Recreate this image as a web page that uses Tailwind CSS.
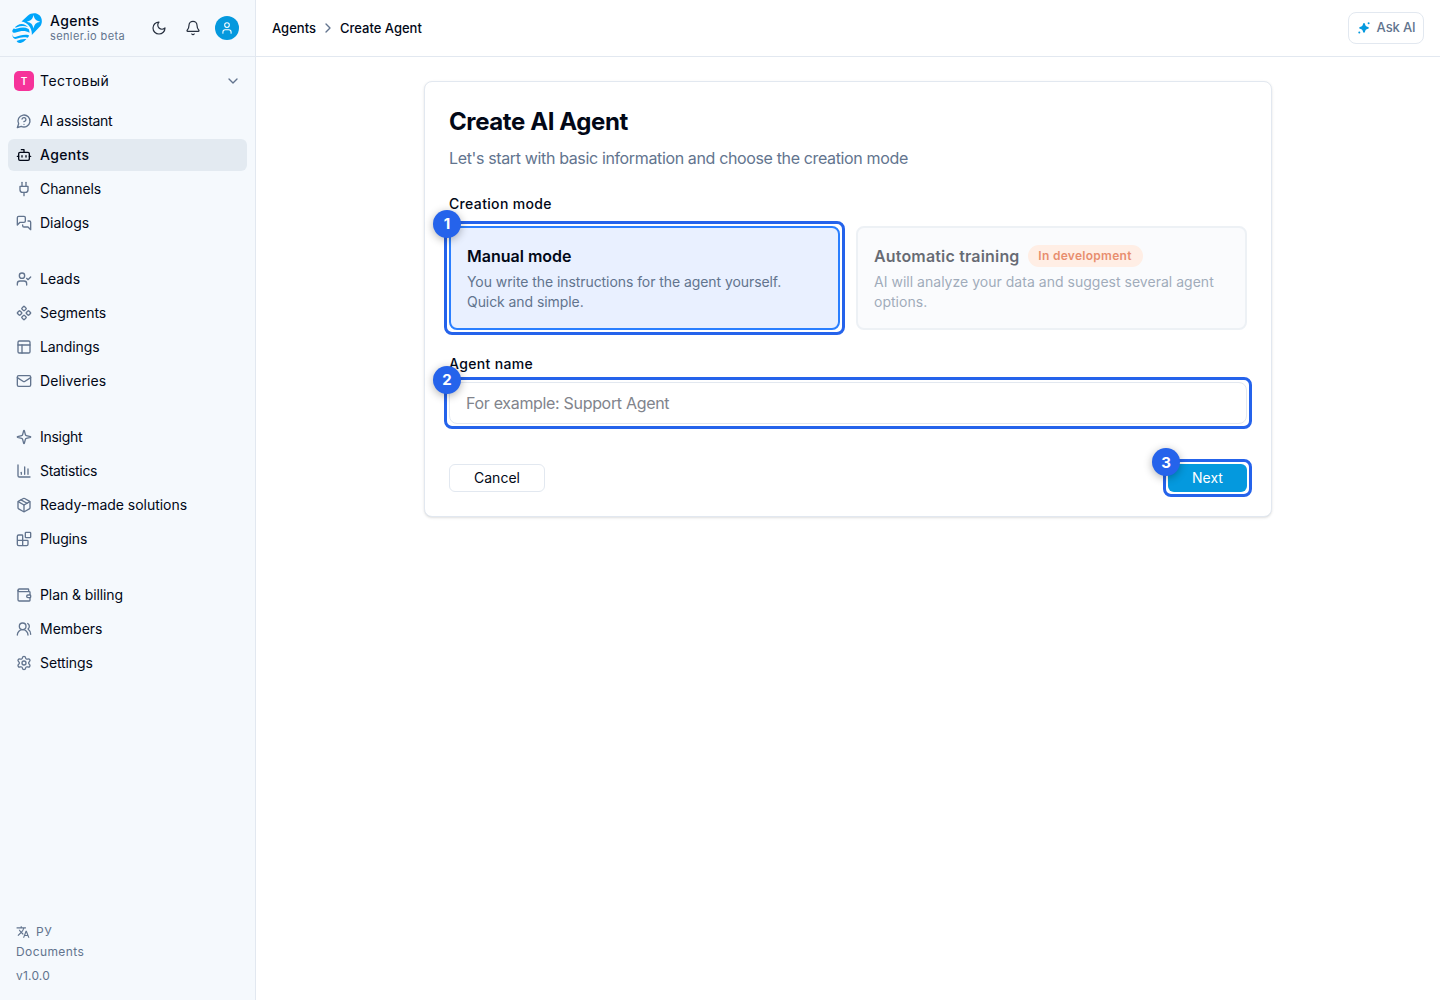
<!DOCTYPE html>
<html lang="en">
<head>
  <meta charset="UTF-8" />
  <meta name="viewport" content="width=device-width, initial-scale=1.0"/>
  <title>Create AI Agent</title>
  <script src="https://cdn.jsdelivr.net/npm/@tailwindcss/browser@4"></script>
</head>

<body class="flex h-screen overflow-hidden bg-white text-[#020817] font-['Inter',sans-serif]">
  <!-- Sidebar -->
  <aside class="flex w-64 shrink-0 flex-col border-r border-slate-200 bg-[#f5f9fd]">
    <div class="flex h-[57px] items-center border-b border-slate-200 pl-3 pr-4">
      <svg class="size-[30px]" viewBox="0 0 30 30" fill="none">
        <path fill="#00a6fb" fill-rule="evenodd" d="M9.5 8.6 16 2.5C19-.3 24.5-.7 27.5 2.3c3 3 3.2 8.200.2 11.500L19.800 22c.6-6.500-3.800-12.500-10.300-13.400ZM21.500 2c-1 4.400-2.300 5.700-6.700 6.700 4.400 1 5.700 2.300 6.700 6.700 1-4.400 2.300-5.700 6.700-6.700-4.400-1-5.700-2.300-6.700-6.700Z"/>
        <path fill="#00a6fb" d="M5.500 12.200c3.700-2.500 8.400-1 10.600 1.900-3.900-1.500-7.300-1.300-11.200.1-1.500.6-2.300.2-1.500-.5Z"/>
        <path fill="#00a6fb" d="M.3 18.200c.3 1.500 1.700 1.900 3.400 1.400 4.800-1.700 9.300-2.600 13.900.2-.1-1.700-.4-2.900-1-3.900-3.900-1.900-7.600-1.500-11.400-.3-1.800.6-3 .5-3.200-.4C.9 16.100.3 17 .3 18.200Z"/>
        <path fill="#00a6fb" d="M.2 20.500c.1 2.400 1 3.800 3 3.500 4.300-.7 8.400-3.200 14-1.600-.3 1-.9 1.800-1.500 2.400-5-1.100-7.900.1-11.300 1-1.400.3-2.600-.2-3.300-1.300-.8-1.300-1.100-2.700-.9-4Z"/>
        <path fill="#00a6fb" d="M4.600 28c3.500-1.300 6.200-2.300 9.800-1.900-1.900 2.300-3.800 3.700-6 3.900-1.500.1-3.200-.5-3.800-2Z"/>
      </svg>
      <div class="ml-2 flex-1 pb-0.5">
        <div class="text-sm leading-[17px] font-medium tracking-[0.35px]">Agents</div>
        <div class="text-[11px] leading-[14px] tracking-[0.38px] text-slate-500">senler.io beta</div>
      </div>
      <svg class="size-4 text-[#27303f]" viewBox="0 0 24 24" fill="none" stroke="currentColor" stroke-width="1.800" stroke-linecap="round" stroke-linejoin="round"><path d="M12 3a6 6 0 0 0 9 9 9 9 0 1 1-9-9Z"/></svg>
      <svg class="ml-[18px] size-4 text-[#27303f]" viewBox="0 0 24 24" fill="none" stroke="currentColor" stroke-width="1.800" stroke-linecap="round" stroke-linejoin="round"><path d="M10.268 21a2 2 0 0 0 3.464 0"/><path d="M3.262 15.326A1 1 0 0 0 4 17h16a1 1 0 0 0 .74-1.673C19.410 13.956 18 12.499 18 8A6 6 0 0 0 6 8c0 4.499-1.411 5.956-2.738 7.326"/></svg>
      <div class="ml-3.5 flex size-6 items-center justify-center rounded-full bg-[#0499de] text-white">
        <svg class="size-3.5" viewBox="0 0 24 24" fill="none" stroke="currentColor" stroke-width="1.800" stroke-linecap="round" stroke-linejoin="round"><circle cx="12" cy="7" r="4"/><path d="M19 21v-2a4 4 0 0 0-4-4H9a4 4 0 0 0-4 4v2"/></svg>
      </div>
    </div>

    <!-- Workspace -->
    <div class="flex h-12 items-center px-3.5 text-sm">
      <span class="mr-1.5 flex size-5 items-center justify-center rounded-[5px] bg-[#f6339a] text-[10px] font-semibold text-white">Т</span>
      <span class="flex-1 tracking-[0.5px]">Тестовый</span>
      <svg class="size-4 text-slate-500" viewBox="0 0 24 24" fill="none" stroke="currentColor" stroke-width="2" stroke-linecap="round" stroke-linejoin="round"><path d="m6 9 6 6 6-6"/></svg>
    </div>

    <!-- Navigation -->
    <nav class="flex flex-1 flex-col gap-6 px-2 text-sm">
      <div class="flex flex-col gap-0.5">
        <a class="flex h-8 items-center gap-2 px-2 tracking-[-0.33px]"><svg class="size-4 text-slate-500" viewBox="0 0 24 24" fill="none" stroke="currentColor" stroke-width="2" stroke-linecap="round" stroke-linejoin="round"><path d="M7.900 20A9 9 0 1 0 4 16.100L2 22Z"/><path d="M9.090 9a3 3 0 0 1 5.830 1c0 2-3 3-3 3"/><path d="M12 17h.01"/></svg>AI assistant</a>
        <a class="flex h-8 items-center gap-2 rounded-md bg-[#e3eaf1] px-2 font-medium tracking-[0.35px]"><svg class="size-4" viewBox="0 0 24 24" fill="none" stroke="currentColor" stroke-width="2" stroke-linecap="round" stroke-linejoin="round"><path d="M12 8V4H8"/><rect width="16" height="12" x="4" y="8" rx="2"/><path d="M2 14h2"/><path d="M20 14h2"/><path d="M15 13v2"/><path d="M9 13v2"/></svg>Agents</a>
        <a class="flex h-8 items-center gap-2 px-2 tracking-[-0.1px]"><svg class="size-4 text-slate-500" viewBox="0 0 24 24" fill="none" stroke="currentColor" stroke-width="2" stroke-linecap="round" stroke-linejoin="round"><path d="M12 22v-5"/><path d="M9 8V2"/><path d="M15 8V2"/><path d="M18 8v5a4 4 0 0 1-4 4h-4a4 4 0 0 1-4-4V8Z"/></svg>Channels</a>
        <a class="flex h-8 items-center gap-2 px-2"><svg class="size-4 text-slate-500" viewBox="0 0 24 24" fill="none" stroke="currentColor" stroke-width="2" stroke-linecap="round" stroke-linejoin="round"><path d="M14 9a2 2 0 0 1-2 2H6l-4 4V4a2 2 0 0 1 2-2h8a2 2 0 0 1 2 2z"/><path d="M18 9h2a2 2 0 0 1 2 2v11l-4-4h-6a2 2 0 0 1-2-2v-1"/></svg>Dialogs</a>
      </div>
      <div class="flex flex-col gap-0.5">
        <a class="flex h-8 items-center gap-2 px-2"><svg class="size-4 text-slate-500" viewBox="0 0 24 24" fill="none" stroke="currentColor" stroke-width="2" stroke-linecap="round" stroke-linejoin="round"><path d="m16 11 2 2 4-4"/><path d="M16 21v-2a4 4 0 0 0-4-4H6a4 4 0 0 0-4 4v2"/><circle cx="9" cy="7" r="4"/></svg>Leads</a>
        <a class="flex h-8 items-center gap-2 px-2"><svg class="size-4 text-slate-500" viewBox="0 0 24 24" fill="none" stroke="currentColor" stroke-width="2" stroke-linecap="round" stroke-linejoin="round"><path d="M15.536 11.293a1 1 0 0 0 0 1.414l2.376 2.377a1 1 0 0 0 1.414 0l2.377-2.377a1 1 0 0 0 0-1.414l-2.377-2.377a1 1 0 0 0-1.414 0z"/><path d="M2.297 11.293a1 1 0 0 0 0 1.414l2.377 2.377a1 1 0 0 0 1.414 0l2.377-2.377a1 1 0 0 0 0-1.414L6.088 8.916a1 1 0 0 0-1.414 0z"/><path d="M8.916 17.912a1 1 0 0 0 0 1.415l2.377 2.376a1 1 0 0 0 1.414 0l2.377-2.376a1 1 0 0 0 0-1.415l-2.377-2.376a1 1 0 0 0-1.414 0z"/><path d="M8.916 4.674a1 1 0 0 0 0 1.414l2.377 2.376a1 1 0 0 0 1.414 0l2.377-2.376a1 1 0 0 0 0-1.414l-2.377-2.377a1 1 0 0 0-1.414 0z"/></svg>Segments</a>
        <a class="flex h-8 items-center gap-2 px-2 tracking-[-0.1px]"><svg class="size-4 text-slate-500" viewBox="0 0 24 24" fill="none" stroke="currentColor" stroke-width="2" stroke-linecap="round" stroke-linejoin="round"><rect width="18" height="18" x="3" y="3" rx="2"/><path d="M3 9h18"/><path d="M9 21V9"/></svg>Landings</a>
        <a class="flex h-8 items-center gap-2 px-2 tracking-[0.1px]"><svg class="size-4 text-slate-500" viewBox="0 0 24 24" fill="none" stroke="currentColor" stroke-width="2" stroke-linecap="round" stroke-linejoin="round"><rect width="20" height="16" x="2" y="4" rx="2"/><path d="m22 7-8.970 5.700a1.940 1.940 0 0 1-2.060 0L2 7"/></svg>Deliveries</a>
      </div>
      <div class="flex flex-col gap-0.5">
        <a class="flex h-8 items-center gap-2 px-2 tracking-[-0.28px]"><svg class="size-4 text-slate-500" viewBox="0 0 24 24" fill="none" stroke="currentColor" stroke-width="2" stroke-linecap="round" stroke-linejoin="round"><path d="M9.937 15.500A2 2 0 0 0 8.500 14.063l-6.135-1.582a.5.500 0 0 1 0-.962L8.500 9.936A2 2 0 0 0 9.937 8.500l1.582-6.135a.5.500 0 0 1 .963 0L14.063 8.500A2 2 0 0 0 15.500 9.937l6.135 1.581a.5.500 0 0 1 0 .964L15.500 14.063a2 2 0 0 0-1.437 1.437l-1.582 6.135a.5.500 0 0 1-.963 0z"/></svg>Insight</a>
        <a class="flex h-8 items-center gap-2 px-2 tracking-[-0.3px]"><svg class="size-4 text-slate-500" viewBox="0 0 24 24" fill="none" stroke="currentColor" stroke-width="2" stroke-linecap="round" stroke-linejoin="round"><path d="M13 17V6"/><path d="M18 17V9"/><path d="M3 3v16a2 2 0 0 0 2 2h16"/><path d="M8 17v-3"/></svg>Statistics</a>
        <a class="flex h-8 items-center gap-2 px-2 tracking-[-0.03px]"><svg class="size-4 text-slate-500" viewBox="0 0 24 24" fill="none" stroke="currentColor" stroke-width="2" stroke-linecap="round" stroke-linejoin="round"><path d="M11 21.730a2 2 0 0 0 2 0l7-4A2 2 0 0 0 21 16V8a2 2 0 0 0-1-1.730l-7-4a2 2 0 0 0-2 0l-7 4A2 2 0 0 0 3 8v8a2 2 0 0 0 1 1.730z"/><path d="M12 22V12"/><path d="m3.300 7 8.700 5 8.700-5"/><path d="m7.500 4.270 9 5.150"/></svg>Ready-made solutions</a>
        <a class="flex h-8 items-center gap-2 px-2 tracking-[-0.15px]"><svg class="size-4 text-slate-500" viewBox="0 0 24 24" fill="none" stroke="currentColor" stroke-width="2" stroke-linecap="round" stroke-linejoin="round"><path d="M10 22V7a1 1 0 0 0-1-1H4a2 2 0 0 0-2 2v12a2 2 0 0 0 2 2h12a2 2 0 0 0 2-2v-5a1 1 0 0 0-1-1H2"/><rect x="14" y="2" width="8" height="8" rx="1"/></svg>Plugins</a>
      </div>
      <div class="flex flex-col gap-0.5">
        <a class="flex h-8 items-center gap-2 px-2 tracking-[-0.1px]"><svg class="size-4 text-slate-500" viewBox="0 0 24 24" fill="none" stroke="currentColor" stroke-width="2" stroke-linecap="round" stroke-linejoin="round"><path d="M19 7V4a1 1 0 0 0-1-1H5a2 2 0 0 0 0 4h15a1 1 0 0 1 1 1v4h-3a2 2 0 0 0 0 4h3a1 1 0 0 0 1-1v-2a1 1 0 0 0-1-1"/><path d="M3 5v14a2 2 0 0 0 2 2h15a1 1 0 0 0 1-1v-4"/></svg>Plan &amp; billing</a>
        <a class="flex h-8 items-center gap-2 px-2"><svg class="size-4 text-slate-500" viewBox="0 0 24 24" fill="none" stroke="currentColor" stroke-width="2" stroke-linecap="round" stroke-linejoin="round"><path d="M18 21a8 8 0 0 0-16 0"/><circle cx="10" cy="8" r="5"/><path d="M22 20c0-3.370-2-6.500-4-8a5 5 0 0 0-.45-8.300"/></svg>Members</a>
        <a class="flex h-8 items-center gap-2 px-2 tracking-[-0.1px]"><svg class="size-4 text-slate-500" viewBox="0 0 24 24" fill="none" stroke="currentColor" stroke-width="2" stroke-linecap="round" stroke-linejoin="round"><path d="M9.671 4.136a2.340 2.340 0 0 1 4.659 0 2.340 2.340 0 0 0 3.319 1.915 2.340 2.340 0 0 1 2.330 4.033 2.340 2.340 0 0 0 0 3.831 2.340 2.340 0 0 1-2.330 4.033 2.340 2.340 0 0 0-3.319 1.915 2.340 2.340 0 0 1-4.659 0 2.340 2.340 0 0 0-3.320-1.915 2.340 2.340 0 0 1-2.330-4.033 2.340 2.340 0 0 0 0-3.831A2.340 2.340 0 0 1 6.350 6.051a2.340 2.340 0 0 0 3.319-1.915"/><circle cx="12" cy="12" r="3"/></svg>Settings</a>
      </div>
    </nav>

    <!-- Sidebar footer -->
    <div class="px-4 pb-4 text-xs text-slate-500">
      <div class="flex h-6 items-center gap-1.5">
        <svg class="size-3.5" viewBox="0 0 24 24" fill="currentColor"><path d="m12.870 15.070-2.540-2.510.03-.03A17.520 17.520 0 0 0 14.070 6H17V4h-7V2H8v2H1v2h11.170C11.500 7.920 10.440 9.750 9 11.350 8.070 10.320 7.300 9.190 6.690 8h-2c.73 1.630 1.730 3.170 2.980 4.560l-5.090 5.020L4 19l5-5 3.110 3.110zM18.500 10h-2L12 22h2l1.120-3h4.750L21 22h2zm-2.620 7 1.620-4.330L19.120 17z"/></svg>
        <span class="tracking-[0.5px]">РУ</span>
      </div>
      <div class="tracking-[0.4px]">Documents</div>
      <div class="mt-2 tracking-[0.2px]">v1.0.0</div>
    </div>
  </aside>

  <div class="flex min-w-0 flex-1 flex-col">
    <!-- Top bar -->
    <header class="flex h-[57px] shrink-0 items-center border-b border-slate-200 px-4 text-[13px] font-medium">
      <span class="pt-px">Agents</span>
      <svg class="mx-1 size-4 text-slate-500" viewBox="0 0 24 24" fill="none" stroke="currentColor" stroke-width="2" stroke-linecap="round" stroke-linejoin="round"><path d="m9 18 6-6-6-6"/></svg>
      <span class="pt-px">Create Agent</span>
      <button class="ml-auto flex h-8 w-[76px] items-center justify-center gap-1.5 rounded-lg border border-slate-200 text-slate-500">
        <svg class="size-3.5 text-[#0499de]" viewBox="0 0 14 14" fill="currentColor"><path d="M7 2c.5 0 .8.3.9.7.5 2.100 1 2.700 3.100 3.300.5.100.8.400.8.900s-.3.800-.8.900c-2.100.6-2.600 1.100-3.100 3.300-.1.400-.4.700-.9.700s-.8-.3-.9-.7c-.5-2.200-1-2.700-3.100-3.300-.5-.1-.8-.4-.8-.9s.3-.8.8-.9c2.100-.6 2.600-1.200 3.100-3.300.1-.4.400-.7.900-.7Z"/><circle cx="11.600" cy="2.300" r="1"/><circle cx="2.300" cy="11.600" r="1"/></svg>
        <span class="tracking-[-0.15px]">Ask AI</span>
      </button>
    </header>

    <!-- Form -->
    <main class="px-6 pt-6">
      <section class="mx-auto w-[848px] rounded-lg border border-slate-200 bg-white p-6 shadow-sm">
        <h1 class="text-2xl leading-8 font-bold tracking-[-0.4px]">Create AI Agent</h1>
        <p class="mt-2 text-base tracking-[-0.36px] text-slate-500">Let's start with basic information and choose the creation mode</p>

        <div class="mt-6 text-sm font-medium tracking-[0.35px]">Creation mode</div>
        <div class="mt-3 grid grid-cols-2 gap-4">
          <div class="relative h-[104px] rounded-lg border-2 border-[#2b7fff] bg-[#e9f0ff] p-4">
            <div class="font-semibold">Manual mode</div>
            <p class="mt-1 text-sm tracking-[-0.07px] text-slate-500">You write the instructions for the agent yourself. Quick and simple.</p>
            <span class="pointer-events-none absolute -inset-[7px] rounded-lg border-3 border-[#2563eb]"></span>
            <span class="absolute -top-[18px] -left-[18px] flex size-7 items-center justify-center rounded-full bg-[#2563eb] pt-px text-[15px] font-bold text-white shadow-[0_2px_8px_rgba(0,0,0,0.3)]">1</span>
          </div>
          <div class="h-[104px] rounded-lg border-2 border-slate-200 bg-slate-50 p-4 opacity-60">
            <div class="flex h-6 items-center gap-2">
              <span class="font-semibold tracking-[0.17px]">Automatic training</span>
              <span class="w-[115px] rounded-full bg-[#ffe3d4] py-[3px] text-center text-xs font-semibold tracking-[0.28px] text-[#d9420b]">In development</span>
            </div>
            <p class="mt-1 text-sm tracking-[0.02px] text-slate-500">AI will analyze your data and suggest several agent options.</p>
          </div>
        </div>

        <div class="mt-6 text-sm font-medium tracking-[0.35px]">Agent name</div>
        <div class="relative mt-2">
          <input type="text" placeholder="For example: Support Agent" class="block h-[42px] w-full rounded-lg border border-slate-200 px-4 text-base tracking-[-0.32px] placeholder:text-[#81848c]" />
          <span class="pointer-events-none absolute -inset-[5px] rounded-lg border-3 border-[#2563eb]"></span>
          <span class="absolute -top-4 -left-4 flex size-7 items-center justify-center rounded-full bg-[#2563eb] pt-px text-[15px] font-bold text-white shadow-[0_2px_8px_rgba(0,0,0,0.3)]">2</span>
        </div>

        <div class="mt-10 flex justify-between text-sm">
          <button class="h-7 w-24 rounded-md border border-slate-200">Cancel</button>
          <div class="relative h-7 w-[79px]">
            <button class="h-7 w-full rounded-md bg-[#0499de] text-white">Next</button>
            <span class="pointer-events-none absolute -inset-[5px] rounded-lg border-3 border-[#2563eb]"></span>
            <span class="absolute -top-4 -left-4 flex size-7 items-center justify-center rounded-full bg-[#2563eb] pt-px text-[15px] font-bold text-white shadow-[0_2px_8px_rgba(0,0,0,0.3)]">3</span>
          </div>
        </div>
      </section>
    </main>
  </div>
</body>
</html>
